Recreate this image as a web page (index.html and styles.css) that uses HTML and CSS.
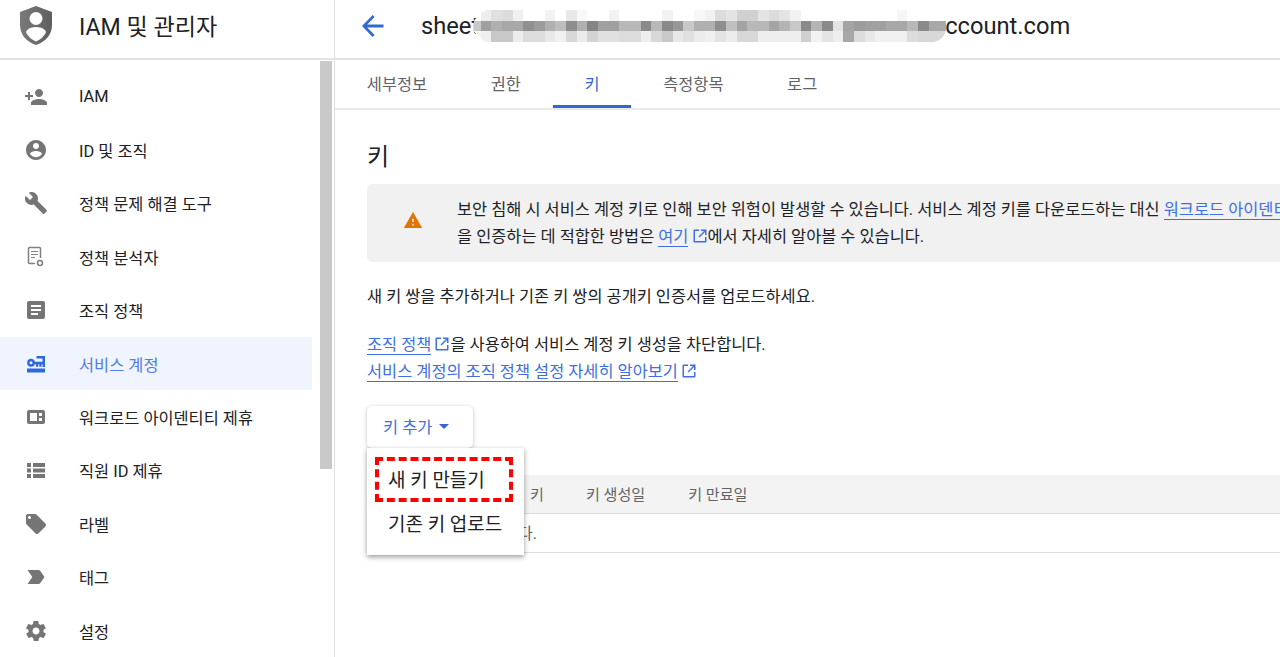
FILE: index.html
```html
<!DOCTYPE html>
<html lang="ko">
<head>
<meta charset="utf-8">
<title>IAM 및 관리자</title>
<link rel="stylesheet" href="styles.css">
</head>
<body>
<div class="app">
  <aside class="side">
    <div class="brand">
      <svg class="brand-icon" viewBox="0 0 34 40"><defs><linearGradient id="sg" x1="0" x2="1"><stop offset="0" stop-color="#7a7a7a"/><stop offset="1" stop-color="#5e5e5e"/></linearGradient></defs><path fill="url(#sg)" d="M17 0 L33 6 V19 C33 29 26 36 17 39 C8 36 1 29 1 19 V6 Z"/><circle cx="17" cy="12.500" r="6.500" fill="#fff"/><path fill="#fff" d="M17 21c6 0 10 3 10 5.500C24.500 31 21 34 17 35.500C13 34 9.500 31 7 26.500C7 24 11 21 17 21Z"/></svg>
      <span class="brand-title">IAM 및 관리자</span>
    </div>
    <div class="side-body">
      <nav class="nav">
        <a class="item"><svg class="ico" viewBox="0 0 24 24"><path d="M15 12c2.200 0 4-1.800 4-4s-1.800-4-4-4-4 1.800-4 4 1.800 4 4 4zm-9-2V7H4v3H1v2h3v3h2v-3h3v-2H6zm9 4c-2.700 0-8 1.300-8 4v2h16v-2c0-2.700-5.300-4-8-4z"/></svg><span>IAM</span></a>
        <a class="item"><svg class="ico" viewBox="0 0 24 24"><path d="M12 2C6.500 2 2 6.500 2 12s4.500 10 10 10 10-4.500 10-10S17.500 2 12 2zm0 3c1.700 0 3 1.300 3 3s-1.300 3-3 3-3-1.300-3-3 1.300-3 3-3zm0 14.200c-2.500 0-4.700-1.300-6-3.200 0-2 4-3.100 6-3.100s6 1.100 6 3.100c-1.300 1.900-3.500 3.200-6 3.200z"/></svg><span>ID 및 조직</span></a>
        <a class="item"><svg class="ico" viewBox="0 0 24 24"><path d="M22.700 19l-9.100-9.100c.9-2.300.4-5-1.500-6.900-2-2-5-2.400-7.400-1.300L9 6 6 9 1.600 4.700C.4 7.100.9 10.100 2.900 12.100c1.900 1.900 4.600 2.400 6.900 1.500l9.100 9.100c.4.400 1 .4 1.400 0l2.300-2.300c.5-.4.500-1.100.1-1.400z"/></svg><span>정책 문제 해결 도구</span></a>
        <a class="item"><svg class="ico" viewBox="0 0 24 24"><path class="ol" d="M11 18.500H5.500a1 1 0 0 1-1-1V3.500a1 1 0 0 1 1-1h10a1 1 0 0 1 1 1V13"/><path class="ol thin" d="M7 6.500h7M7 9.500h7M7 12.500h4"/><circle class="ol" cx="16" cy="18" r="2.500"/></svg><span>정책 분석자</span></a>
        <a class="item"><svg class="ico" viewBox="0 0 24 24"><path d="M19 3H5c-1.100 0-2 .9-2 2v14c0 1.100.9 2 2 2h14c1.100 0 2-.9 2-2V5c0-1.100-.9-2-2-2zm-5 14H7v-2h7v2zm3-4H7v-2h10v2zm0-4H7V7h10v2z"/></svg><span>조직 정책</span></a>
        <a class="item active"><svg class="ico" viewBox="0 0 24 24"><path d="M3 16.500h18v4H3zM12.500 4h8.500v2.500h-8.500zM18.500 4H21v11h-2.500z"/><path fill-rule="evenodd" d="M7 6.800a4 4 0 0 1 3.900 3H19v2.400h-1.500v2.500h-2.200v-2.500h-1.100v2.500H12v-2.500h-1.100A4 4 0 1 1 7 6.800zm0 2.500a1.500 1.500 0 1 0 0 3 1.500 1.500 0 0 0 0-3z"/></svg><span>서비스 계정</span></a>
        <a class="item"><svg class="ico" viewBox="0 0 24 24"><path fill-rule="evenodd" d="M5 5h14a2 2 0 0 1 2 2v10a2 2 0 0 1-2 2H5a2 2 0 0 1-2-2V7a2 2 0 0 1 2-2zm1 3v8h7V8zm9 0v3h3V8zm0 5v3h3v-3z"/></svg><span>워크로드 아이덴티티 제휴</span></a>
        <a class="item"><svg class="ico" viewBox="0 0 24 24"><path d="M3 5h4v4H3zm6 0h12v4H9zM3 10.500h4v4H3zm6 0h12v4H9zM3 16h4v4H3zm6 0h12v4H9z"/></svg><span>직원 ID 제휴</span></a>
        <a class="item"><svg class="ico" viewBox="0 0 24 24"><path d="M21.400 11.600l-9-9C12 2.200 11.500 2 11 2H4c-1.100 0-2 .9-2 2v7c0 .6.200 1.100.6 1.400l9 9c.4.400.9.600 1.400.6s1.100-.2 1.400-.6l7-7c.4-.4.600-.9.600-1.400s-.2-1.100-.6-1.400zM5.500 7C4.700 7 4 6.300 4 5.500S4.700 4 5.500 4 7 4.700 7 5.500 6.300 7 5.500 7z"/></svg><span>라벨</span></a>
        <a class="item"><svg class="ico" viewBox="0 0 24 24"><path d="M3.500 18.990l11 .01c.67 0 1.270-.33 1.630-.84L20.500 12l-4.370-6.160c-.36-.51-.96-.84-1.630-.84l-11 .01L8.340 12 3.500 18.990z"/></svg><span>태그</span></a>
        <a class="item"><svg class="ico" viewBox="0 0 24 24"><path d="M19.400 13c0-.3.100-.6.100-1s0-.7-.1-1l2.100-1.600c.2-.1.200-.4.100-.6l-2-3.500c-.1-.2-.4-.3-.6-.2l-2.500 1c-.5-.4-1.100-.7-1.700-1l-.4-2.700c0-.2-.2-.4-.5-.4h-4c-.3 0-.5.200-.5.400l-.4 2.700c-.6.200-1.100.6-1.700 1l-2.500-1c-.2-.1-.5 0-.6.200l-2 3.500c-.1.200-.1.500.1.600L4.600 11c0 .3-.1.700-.1 1s0 .7.100 1l-2.100 1.600c-.2.100-.2.400-.1.600l2 3.500c.1.200.4.300.6.200l2.500-1c.5.400 1.100.7 1.700 1l.4 2.700c0 .2.200.4.500.4h4c.3 0 .5-.2.500-.4l.4-2.700c.6-.2 1.200-.6 1.700-1l2.500 1c.2.100.5 0 .6-.2l2-3.500c.1-.2.100-.5-.1-.6L19.400 13zM12 15.500c-1.900 0-3.500-1.600-3.500-3.500s1.600-3.500 3.500-3.500 3.500 1.600 3.500 3.500-1.600 3.500-3.500 3.500z"/></svg><span>설정</span></a>
      </nav>
      <div class="scroll"><div class="thumb"></div></div>
    </div>
  </aside>
  <main class="main">
    <header class="top">
      <svg class="back" viewBox="0 0 24 24"><path d="M22.500 10.500H6.200l7.400-7.400L11.700 1 1 12l10.700 11 1.900-2.100-7.400-7.400h16.300z"/></svg>
      <h1 class="acct"><span>sheet</span><svg class="blob" width="472" height="32" viewBox="0 0 472 32"><defs><clipPath id="c"><path d="M12 0H458a14 14 0 0 1 14 14V18a14 14 0 0 1-14 14H12C8 30 4 26 0 21.500V10.500C4 6 8 2 12 0Z"/></clipPath></defs><g clip-path="url(#c)"><rect width="472" height="32" fill="#fff"/><g transform="translate(6.670 0) scale(10.670)" shape-rendering="crispEdges">
<g><rect x="-1" y="1" width="1" height="1" fill="#c8c8c8"/><rect x="-1" y="2" width="1" height="1" fill="#f6f6f6"/></g>
<rect x="0" y="0" width="1" height="1" fill="#eee"/><rect x="1" y="0" width="1" height="1" fill="#e0e0e0"/><rect x="2" y="0" width="1" height="1" fill="#dcdcdc"/><rect x="3" y="0" width="1" height="1" fill="#f0f0f0"/><rect x="6" y="0" width="1" height="1" fill="#f2f2f2"/><rect x="8" y="0" width="1" height="1" fill="#e8e8e8"/><rect x="9" y="0" width="1" height="1" fill="#f8f8f8"/><rect x="12" y="0" width="1" height="1" fill="#f2f2f2"/><rect x="17" y="0" width="1" height="1" fill="#f2f2f2"/><rect x="20" y="0" width="1" height="1" fill="#f8f8f8"/><rect x="21" y="0" width="1" height="1" fill="#f2f2f2"/><rect x="22" y="0" width="1" height="1" fill="#dcdcdc"/><rect x="23" y="0" width="1" height="1" fill="#e4e4e4"/><rect x="24" y="0" width="1" height="1" fill="#d0d0d0"/><rect x="25" y="0" width="1" height="1" fill="#d0d0d0"/><rect x="26" y="0" width="1" height="1" fill="#e4e4e4"/><rect x="27" y="0" width="1" height="1" fill="#dcdcdc"/><rect x="28" y="0" width="1" height="1" fill="#e4e4e4"/><rect x="29" y="0" width="1" height="1" fill="#f2f2f2"/><rect x="39" y="0" width="1" height="1" fill="#f6f6f6"/>
<rect x="0" y="1" width="1" height="1" fill="#a0a0a0"/><rect x="1" y="1" width="1" height="1" fill="#b0b0b0"/><rect x="2" y="1" width="1" height="1" fill="#a8a8a8"/><rect x="3" y="1" width="1" height="1" fill="#a8a8a8"/><rect x="4" y="1" width="1" height="1" fill="#909090"/><rect x="5" y="1" width="1" height="1" fill="#9c9c9c"/><rect x="6" y="1" width="1" height="1" fill="#b0b0b0"/><rect x="7" y="1" width="1" height="1" fill="#bdbdbd"/><rect x="8" y="1" width="1" height="1" fill="#8e8e8e"/><rect x="9" y="1" width="1" height="1" fill="#b0b0b0"/><rect x="10" y="1" width="1" height="1" fill="#848484"/><rect x="11" y="1" width="1" height="1" fill="#a0a0a0"/><rect x="12" y="1" width="1" height="1" fill="#a0a0a0"/><rect x="13" y="1" width="1" height="1" fill="#b8b8b8"/><rect x="14" y="1" width="1" height="1" fill="#b8b8b8"/><rect x="15" y="1" width="1" height="1" fill="#8a8a8a"/><rect x="16" y="1" width="1" height="1" fill="#b8b8b8"/><rect x="17" y="1" width="1" height="1" fill="#8a8a8a"/><rect x="18" y="1" width="1" height="1" fill="#989898"/><rect x="19" y="1" width="1" height="1" fill="#c8c8c8"/><rect x="20" y="1" width="1" height="1" fill="#b0b0b0"/><rect x="21" y="1" width="1" height="1" fill="#b0b0b0"/><rect x="22" y="1" width="1" height="1" fill="#8e8e8e"/><rect x="23" y="1" width="1" height="1" fill="#c0c0c0"/><rect x="24" y="1" width="1" height="1" fill="#a4a4a4"/><rect x="25" y="1" width="1" height="1" fill="#b8b8b8"/><rect x="26" y="1" width="1" height="1" fill="#b8b8b8"/><rect x="27" y="1" width="1" height="1" fill="#a4a4a4"/><rect x="28" y="1" width="1" height="1" fill="#b4b4b4"/><rect x="29" y="1" width="1" height="1" fill="#c8c8c8"/><rect x="30" y="1" width="1" height="1" fill="#8a8a8a"/><rect x="31" y="1" width="1" height="1" fill="#b4b4b4"/><rect x="32" y="1" width="1" height="1" fill="#8a8a8a"/><rect x="33" y="1" width="1" height="1" fill="#e4e4e4"/><rect x="34" y="1" width="1" height="1" fill="#a4a4a4"/><rect x="35" y="1" width="1" height="1" fill="#9c9c9c"/><rect x="36" y="1" width="1" height="1" fill="#a0a0a0"/><rect x="37" y="1" width="1" height="1" fill="#a0a0a0"/><rect x="38" y="1" width="1" height="1" fill="#a8a8a8"/><rect x="39" y="1" width="1" height="1" fill="#a8a8a8"/><rect x="40" y="1" width="1" height="1" fill="#b8b8b8"/><rect x="41" y="1" width="1" height="1" fill="#8a8a8a"/><rect x="42" y="1" width="2" height="1" fill="#a8a8a8"/>
<rect x="0" y="2" width="1" height="1" fill="#f0f0f0"/><rect x="1" y="2" width="1" height="1" fill="#c8c8c8"/><rect x="2" y="2" width="1" height="1" fill="#c8c8c8"/><rect x="3" y="2" width="1" height="1" fill="#ececec"/><rect x="4" y="2" width="1" height="1" fill="#dcdcdc"/><rect x="5" y="2" width="1" height="1" fill="#dcdcdc"/><rect x="6" y="2" width="1" height="1" fill="#e8e8e8"/><rect x="7" y="2" width="1" height="1" fill="#f0f0f0"/><rect x="8" y="2" width="1" height="1" fill="#d8d8d8"/><rect x="9" y="2" width="1" height="1" fill="#ececec"/><rect x="10" y="2" width="1" height="1" fill="#d4d4d4"/><rect x="11" y="2" width="1" height="1" fill="#e0e0e0"/><rect x="12" y="2" width="1" height="1" fill="#e0e0e0"/><rect x="13" y="2" width="1" height="1" fill="#dcdcdc"/><rect x="14" y="2" width="1" height="1" fill="#dcdcdc"/><rect x="15" y="2" width="1" height="1" fill="#eeeeee"/><rect x="16" y="2" width="1" height="1" fill="#d8d8d8"/><rect x="17" y="2" width="1" height="1" fill="#c8c8c8"/><rect x="18" y="2" width="1" height="1" fill="#e8e8e8"/><rect x="19" y="2" width="1" height="1" fill="#e0e0e0"/><rect x="20" y="2" width="1" height="1" fill="#ececec"/><rect x="21" y="2" width="1" height="1" fill="#f0f0f0"/><rect x="22" y="2" width="1" height="1" fill="#e4e4e4"/><rect x="23" y="2" width="1" height="1" fill="#ececec"/><rect x="24" y="2" width="1" height="1" fill="#d8d8d8"/><rect x="25" y="2" width="1" height="1" fill="#d8d8d8"/><rect x="26" y="2" width="4" height="1" fill="#eeeeee"/><rect x="30" y="2" width="1" height="1" fill="#d0d0d0"/><rect x="31" y="2" width="1" height="1" fill="#f2f2f2"/><rect x="32" y="2" width="1" height="1" fill="#e4e4e4"/><rect x="33" y="2" width="1" height="1" fill="#eeeeee"/><rect x="34" y="2" width="1" height="1" fill="#a8a8a8"/><rect x="35" y="2" width="1" height="1" fill="#dcdcdc"/><rect x="36" y="2" width="1" height="1" fill="#e8e8e8"/><rect x="37" y="2" width="3" height="1" fill="#f0f0f0"/><rect x="40" y="2" width="1" height="1" fill="#dcdcdc"/><rect x="41" y="2" width="3" height="1" fill="#d8d8d8"/>
</g></g></svg><span class="acct-end">ccount.com</span></h1>
    </header>
    <div class="tabs">
      <a class="tab">세부정보</a><a class="tab">권한</a><a class="tab on">키</a><a class="tab">측정항목</a><a class="tab">로그</a>
    </div>
    <div class="content">
      <h2 class="heading">키</h2>
      <div class="banner">
        <svg class="warn" viewBox="0 0 24 24"><path d="M1 21.500h22L12 2.500 1 21.500zm12-3h-2v-2h2v2zm0-4h-2v-4h2v4z"/></svg>
        <div class="banner-text">
          <p>보안 침해 시 서비스 계정 키로 인해 보안 위험이 발생할 수 있습니다. 서비스 계정 키를 다운로드하는 대신 <a class="lnk">워크로드 아이덴티티 제휴</a></p>
          <p>을 인증하는 데 적합한 방법은 <a class="lnk">여기</a> <svg class="ext" viewBox="0 0 16 16"><path d="M2.500 1.500H7v1.500H3v10h10V9h1.500v4.500a1 1 0 0 1-1 1h-11a1 1 0 0 1-1-1v-11a1 1 0 0 1 1-1zM9 1.500h5.500V7H13V4L7.500 9.500l-1-1L12 3H9z"/></svg>에서 자세히 알아볼 수 있습니다.</p>
        </div>
      </div>
      <p class="para">새 키 쌍을 추가하거나 기존 키 쌍의 공개키 인증서를 업로드하세요.</p>
      <p class="para two"><a class="lnk">조직 정책</a> <svg class="ext" viewBox="0 0 16 16"><path d="M2.500 1.500H7v1.500H3v10h10V9h1.500v4.500a1 1 0 0 1-1 1h-11a1 1 0 0 1-1-1v-11a1 1 0 0 1 1-1zM9 1.500h5.500V7H13V4L7.500 9.500l-1-1L12 3H9z"/></svg>을 사용하여 서비스 계정 키 생성을 차단합니다.<br><a class="lnk">서비스 계정의 조직 정책 설정 자세히 알아보기</a> <svg class="ext" viewBox="0 0 16 16"><path d="M2.500 1.500H7v1.500H3v10h10V9h1.500v4.500a1 1 0 0 1-1 1h-11a1 1 0 0 1-1-1v-11a1 1 0 0 1 1-1zM9 1.500h5.500V7H13V4L7.500 9.500l-1-1L12 3H9z"/></svg></p>
      <div class="actions">
        <button class="add">키 추가<i class="caret"></i></button>
        <div class="menu">
          <div class="menu-item hl">새 키 만들기</div>
          <div class="menu-item">기존 키 업로드</div>
        </div>
      </div>
      <div class="table">
        <div class="thead"><span class="c1">키</span><span class="c2">키 생성일</span><span class="c3">키 만료일</span></div>
        <div class="tbody">표시할 행이 없습니다.</div>
      </div>
    </div>
  </main>
</div>
</body>
</html>
```
FILE: styles.css
```css
* { box-sizing: border-box; }
html, body { margin: 0; height: 100%; overflow: hidden; background: #fff; }
body { font-family: Roboto, "Noto Sans CJK KR", sans-serif; color: #202124; font-size: 16.400px; }
.app { display: flex; height: 657px; width: 1280px; overflow: hidden; }
.side { width: 335px; flex: none; border-right: 1px solid #e0e0e0; display: flex; flex-direction: column; }
.brand { height: 60px; flex: none; border-bottom: 2px solid #e3e3e3; display: flex; align-items: center; padding-left: 19px; }
.brand-icon { width: 34px; height: 40px; margin-top: -6px; }
.brand-title { margin-left: 26px; font-size: 23.100px; margin-top: -8px; color: #202124; }
.side-body { flex: 1; display: flex; min-height: 0; }
.nav { width: 312px; flex: none; padding-top: 10px; margin-right: 7px; }
.item { display: flex; align-items: center; height: 53.400px; padding-left: 24px; color: #202124; }
.item span { margin-left: 31px; }
.item .ico { width: 24px; height: 24px; fill: #757575; flex: none; }
.item .ol { fill: none; stroke: #808080; stroke-width: 1.500; }
.item .ol.thin { stroke-width: 1.200; }
.item.active { background: #eff4fe; color: #4e7ee0; }
.item.active .ico { fill: #2f67dc; }
.scroll { width: 14px; flex: none; padding: 1px 1px 0; }
.thumb { height: 408px; background: #c9c9c9; width: 12px; }
.main { flex: 1; min-width: 0; }
.top { height: 60px; border-bottom: 2px solid #e3e3e3; display: flex; align-items: center; padding-left: 26px; }
.back { width: 24px; height: 24px; fill: #3367d6; flex: none; margin-top: -6px; }
.acct { margin: -6px 0 0 36px; font-weight: 400; font-size: 23.700px; color: #202124; display: flex; align-items: center; height: 40px; white-space: nowrap; }
.blob { margin-left: -5px; flex: none; }
.acct-end { margin-left: -1px; }
.tabs { height: 50px; border-bottom: 2px solid #e9e9e9; display: flex; }
.tab { padding: 0 31.800px; height: 48px; display: flex; align-items: center; color: #5f6368; border-bottom: 3px solid transparent; }
.tab.on { color: #3367d6; border-bottom-color: #3367d6; }
.content { padding: 29px 0 0 32px; }
.heading { margin: 0; font-size: 24px; font-weight: 400; line-height: 36px; }
.banner { margin-top: 9px; width: 960px; height: 78px; background: #f1f1f1; border-radius: 5px; display: flex; align-items: center; padding-left: 35.500px; }
.warn { width: 20px; height: 20px; fill: #e37400; flex: none; margin-top: -6px; }
.banner-text { margin-left: 34.500px; white-space: nowrap; overflow: hidden; flex: 1; min-width: 0; }
.banner-text p { margin: 0; line-height: 27px; }
.lnk { color: #3f6fe0; border-bottom: 1px solid #3f6fe0; }
.ext { width: 16px; height: 16px; margin-left: -1px; fill: #3f6fe0; vertical-align: -2px; }
.para { margin: 21px 0 0; line-height: 27px; white-space: nowrap; }
.two { margin-top: 21px; }
.actions { margin-top: 21px; position: relative; height: 42px; }
.add { width: 106px; height: 42px; background: #fff; border: 0; border-radius: 5px; box-shadow: 0 1px 4px rgba(0,0,0,.25); font: inherit; color: #3f6fe0; display: flex; align-items: center; padding: 0 0 2px 16px; }
.caret { margin-left: 7px; border: 5px solid transparent; border-top: 5px solid #3367d6; border-bottom: 0; }
.menu { position: absolute; left: 0; top: 42px; width: 157px; height: 107px; background: #fff; box-shadow: 0 2px 5px rgba(0,0,0,.4); z-index: 2; padding-top: 9px; }
.menu-item { height: 43px; display: flex; align-items: center; padding: 0 0 3px 21px; font-size: 19px; color: #202124; white-space: nowrap; }
.menu-item.hl { outline: 4px dashed #f00; outline-offset: -4px; width: 138px; margin-left: 8px; padding: 0 0 2px 13px; height: 45px; }
.table { margin-top: 27px; }
.thead { height: 39px; background: #f3f3f3; border-bottom: 1px solid #dcdcdc; display: flex; align-items: center; color: #5f6368; font-size: 15.100px; padding: 0 0 3px 163px; }
.c2 { margin-left: 42px; }
.c3 { margin-left: 43px; }
.tbody { height: 39px; border-bottom: 1px solid #dcdcdc; display: flex; align-items: center; padding: 0 0 2px 22px; color: #5f6368; }
```
